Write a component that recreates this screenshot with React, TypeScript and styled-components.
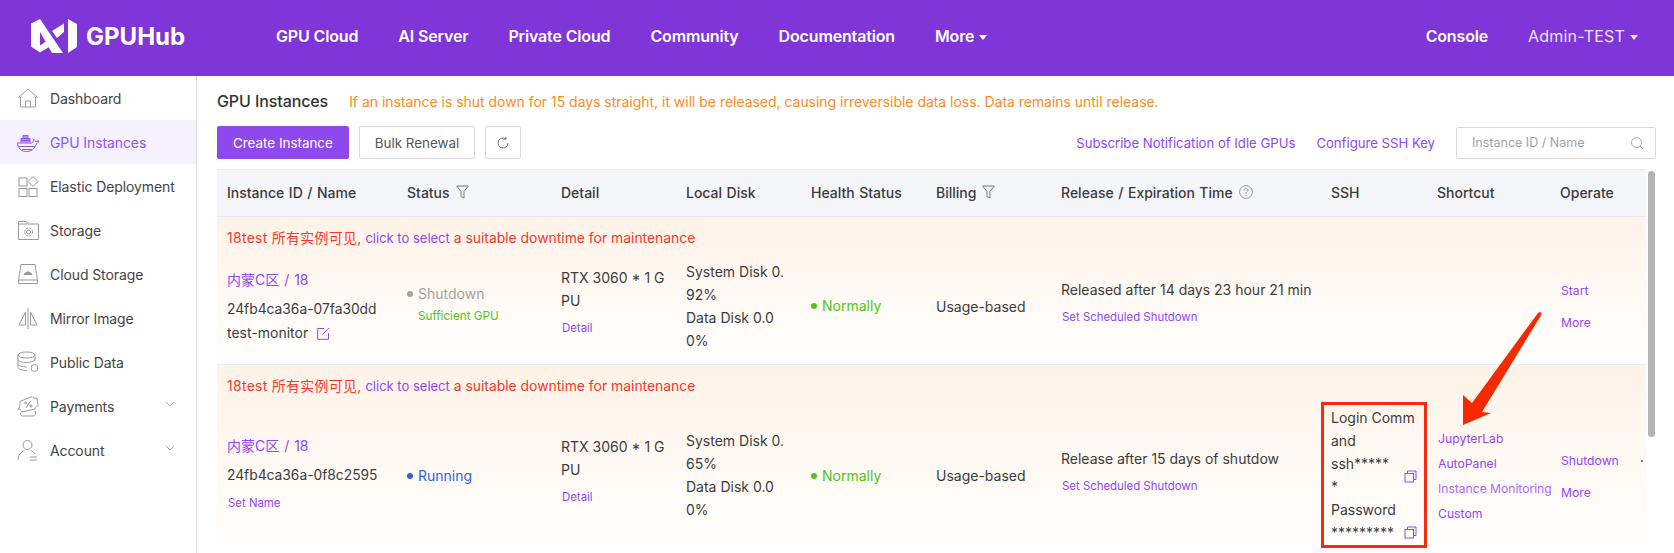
import styled, { createGlobalStyle } from "styled-components";
import { ReactNode } from "react";

const GlobalStyle = createGlobalStyle`
  html, body { margin: 0; padding: 0; height: 100%; overflow: hidden; background: #fff; }
  body { font-family: Inter, "Noto Sans CJK SC", sans-serif; font-size: 14px; color: #333; }
`;

const purple = "#9048f0";

const Page = styled.div`
  height: 553px;
  display: flex;
  flex-direction: column;
  overflow: hidden;
`;

const Header = styled.header`
  height: 76px;
  box-sizing: border-box;
  flex: none;
  background: #7f35d8;
  display: flex;
  align-items: center;
  padding: 0 36px 4px 31px;
  color: #fff;
`;

const Brand = styled.div`
  width: 245px;
  display: flex;
  align-items: center;
  gap: 9px;
  font-size: 24px;
  font-weight: 700;
`;

const Nav = styled.nav`
  flex: 1;
  display: flex;
  align-items: center;
  gap: 40px;
`;

const NavLink = styled.span`
  font-size: 16px;
  font-weight: 600;
  letter-spacing: -0.15px;
  display: flex;
  align-items: center;
  gap: 5px;
`;

const UserLink = styled(NavLink)`
  font-weight: 400;
  letter-spacing: 0.2px;
  opacity: 0.86;
  margin-left: 40px;
`;

const Caret = styled.i`
  width: 0;
  height: 0;
  border-left: 4.5px solid transparent;
  border-right: 4.5px solid transparent;
  border-top: 5px solid #fff;
  margin-top: 2px;
`;

const Body = styled.div`
  flex: 1;
  min-height: 0;
  display: flex;
`;

const Sidebar = styled.aside`
  width: 196px;
  flex: none;
  border-right: 1px solid #dcdde2;
`;

const MenuItem = styled.div<{ $active?: boolean }>`
  height: 44px;
  display: flex;
  align-items: center;
  padding-left: 16px;
  gap: 10px;
  color: ${(p) => (p.$active ? "#9254f0" : "#444")};
  background: ${(p) => (p.$active ? "#f6f1fe" : "transparent")};
  svg.ico {
    width: 24px;
    height: 24px;
    flex: none;
    fill: none;
    stroke: ${(p) => (p.$active ? "#9254f0" : "#999")};
    stroke-width: 1;
  }
`;

const MenuLabel = styled.span`
  flex: 1;
  letter-spacing: -0.1px;
`;

const Chevron = styled.svg`
  width: 10px;
  height: 6px;
  margin: 0 21px 4px 0;
  fill: none;
  stroke: #aaa;
`;

const Main = styled.main`
  flex: 1;
  min-width: 0;
  padding: 0 18px 0 20px;
`;

const TitleRow = styled.div`
  height: 50px;
  display: flex;
  align-items: center;
  gap: 21px;
`;

const Title = styled.h1`
  margin: 0;
  font-size: 16px;
  font-weight: 500;
  color: #333;
  letter-spacing: -0.1px;
`;

const Warning = styled.span`
  font-size: 13.95px;
  color: #fa8c23;
`;

const Toolbar = styled.div`
  height: 33px;
  display: flex;
  align-items: center;
  gap: 10px;
`;

const Button = styled.button<{ $primary?: boolean }>`
  height: 33px;
  padding: 0 15px;
  box-sizing: border-box;
  font: inherit;
  font-size: 13.4px;
  border-radius: 2px;
  border: 1px solid ${(p) => (p.$primary ? "#8f48ec" : "#dcdde2")};
  background: ${(p) => (p.$primary ? "#8f48ec" : "#fff")};
  color: ${(p) => (p.$primary ? "#fff" : "#555")};
`;

const RefreshButton = styled(Button)`
  width: 36px;
  padding: 0;
  display: flex;
  align-items: center;
  justify-content: center;
`;

const ToolbarRight = styled.div`
  margin-left: auto;
  display: flex;
  align-items: center;
  gap: 21px;
`;

const ToolLink = styled.span`
  font-size: 13.15px;
  color: ${purple};
`;

const SearchBox = styled.div`
  width: 200px;
  height: 32px;
  box-sizing: border-box;
  border: 1px solid #dcdde2;
  border-radius: 2px;
  display: flex;
  align-items: center;
  justify-content: space-between;
  padding: 0 11px 0 15px;
  color: #a0a3ab;
  font-size: 12.5px;
`;

const TableWrap = styled.div`
  position: relative;
  margin-top: 10px;
  padding-right: 10px;
`;

const Scrollbar = styled.div`
  position: absolute;
  right: 1px;
  top: 2px;
  width: 7px;
  height: 266px;
  border-radius: 4px;
  background: #b3b3b3;
`;

const columns = "180px 154px 125px 125px 125px 125px 270px 106px 123px 1fr";

const HeadRow = styled.div`
  display: grid;
  grid-template-columns: ${columns};
  height: 48px;
  box-sizing: border-box;
  align-items: center;
  padding-bottom: 2px;
  background: #f5f6fa;
  border-top: 1px solid #e9eaf0;
  border-bottom: 1px solid #e9eaf0;
  font-weight: 500;
  font-size: 14px;
  word-spacing: 0.8px;
  color: #3b3b3b;
`;

const HeadCell = styled.div`
  padding-left: 10px;
  display: flex;
  align-items: center;
  gap: 6px;
  white-space: nowrap;
`;

const Row = styled.div`
  background: linear-gradient(#fff3e8, #fff);
  border-bottom: 1px solid #e9edf5;
  padding-bottom: 12px;
`;

const Notice = styled.div<{ $height: number }>`
  height: ${(p) => p.$height}px;
  box-sizing: border-box;
  padding: 11px 0 0 10px;
  font-size: 13.9px;
  line-height: 20px;
  color: #f5382c;
`;

const NoticeCjk = styled.span`
  letter-spacing: 0.33px;
`;

const NoticeLink = styled.span`
  color: ${purple};
  font-size: 13px;
`;

const Cells = styled.div`
  display: grid;
  grid-template-columns: ${columns};
  align-items: center;
`;

const Cell = styled.div<{ $lift?: number }>`
  padding: 0 10px ${(p) => p.$lift ?? 0}px;
  line-height: 23px;
  font-size: 14px;
  color: #3c3c3c;
  word-break: break-all;
  position: relative;
`;

const Wide = styled(Cell)`
  white-space: nowrap;
`;

const Region = styled.div`
  color: ${purple};
  word-spacing: 1px;
  margin-bottom: 7px;
`;

const MachineId = styled.div`
  font-size: 13.8px;
`;

const EditIcon = styled.svg`
  width: 13px;
  height: 13px;
  margin-left: 9px;
  vertical-align: -2px;
  fill: none;
  stroke: ${purple};
`;

const SmallLink = styled.div`
  font-size: 11.4px;
  line-height: 18px;
  color: ${purple};
  margin-top: 7px;
  padding-left: 1px;
`;

const StatusText = styled.div<{ $color: string }>`
  color: ${(p) => p.$color};
  white-space: nowrap;
`;

const Dot = styled.i<{ $color: string }>`
  display: inline-block;
  width: 6px;
  height: 6px;
  border-radius: 50%;
  margin-right: 5px;
  vertical-align: 2px;
  background: ${(p) => p.$color};
`;

const GpuNote = styled.div`
  font-size: 11.7px;
  line-height: 23px;
  color: #52c41a;
  padding-left: 11px;
`;

const CopyLine = styled.div`
  position: relative;
`;

const CopyIcon = styled.svg<{ $bottom: number }>`
  position: absolute;
  right: 0;
  bottom: ${(p) => p.$bottom}px;
  width: 13px;
  height: 13px;
  fill: none;
  stroke: ${purple};
`;

const RedBox = styled.div`
  position: absolute;
  left: 0;
  right: 0;
  top: -4px;
  bottom: -4px;
  border: 3px solid #f02d12;
  box-sizing: border-box;
  pointer-events: none;
`;

const LinkStack = styled.div<{ $gap: number; $top: number }>`
  display: flex;
  flex-direction: column;
  gap: ${(p) => p.$gap}px;
  padding: ${(p) => p.$top}px 0 0 1px;
  font-size: 12.2px;
  line-height: 16px;
  color: ${purple};
  white-space: nowrap;
`;

const Fade = styled.span`
  font-size: 12.1px;
  opacity: 0.8;
`;

const Arrow = styled.svg`
  position: absolute;
  left: 1246px;
  top: 143px;
  width: 80px;
  height: 115px;
  fill: #f52a00;
  overflow: visible;
`;

const Stray = styled.i`
  position: absolute;
  right: 3px;
  top: calc(50% - 15px);
  width: 2px;
  height: 2px;
  border-radius: 50%;
  background: #555;
`;

function Logo() {
  return (
    <svg width="46" height="34" viewBox="11 9 46 34" fill="#fff">
      <path d="M11 13.500 20 9 43 43H32L20 22V35.500L26 31.500 29 37 20 42.500 11 36.500Z" />
      <path d="M32 21 44 13.500V22L37 28Z" />
      <path d="M48 9 57 14V37L48 43Z" />
    </svg>
  );
}

const icons: Record<string, ReactNode> = {
  home: (
    <>
      <path d="M2 12 12 3l10 9M4.500 10.500V21h15V10.500" />
      <path d="M9.500 21v-6h5v6" />
    </>
  ),
  whale: (
    <>
      <path d="M1.500 13h14.500c1-.4 1.500-2.500 2-3.500 1 1 1.500 1.500 1.700 2.300l3-1c0 1-.8 2.500-2.400 3C19 19 15 21.500 10.500 21.500 5 21.500 2 18 1.500 13Z" />
      <path d="M3 16.500h16M6 19.500h10" />
      <path d="M5 12.500v-4h9v4M7 8.500v-3h5v3M5 10.500h9" fill="currentColor" fillOpacity=".6" />
    </>
  ),
  apps: (
    <>
      <rect x="3" y="4" width="8" height="8" />
      <path d="m17 2.500 5 5-5 5-5-5Z" />
      <rect x="3" y="14.500" width="8" height="8" />
      <rect x="13" y="14.500" width="8" height="8" />
    </>
  ),
  folder: (
    <>
      <path d="M2.500 21.500V3.500h8l1 2.500h11v15.500Z" />
      <path d="M2.500 6h9" />
      <circle cx="12.500" cy="14" r="2" />
      <circle cx="12.500" cy="14" r="4" strokeDasharray="2 1.200" />
    </>
  ),
  drive: (
    <>
      <path d="M5 2.500h14L21.500 18v3.500h-19V18Z" />
      <path d="M2.500 18h19" />
      <path d="M8 12.500c0-1 1-1.500 2-1.500.5-1.500 3.500-1.500 4 0 1 0 2 .5 2 1.500Z" fill="#999" />
    </>
  ),
  mirror: (
    <>
      <path d="M12 2v21" />
      <path d="M9.500 6v13H3ZM14.500 6v13H21Z" />
    </>
  ),
  data: (
    <>
      <ellipse cx="10.500" cy="5" rx="8.500" ry="3" />
      <path d="M2 5v12.500c0 1.500 4 3 9 3M19 5v6M2 9.500c0 1.500 4 3 8.500 3s8.500-1.500 8.500-3M2 14c0 1.500 4 3 9 3" />
      <circle cx="18.500" cy="18" r="3.500" />
    </>
  ),
  pay: (
    <>
      <path d="M4 7.500 16 2.500c1 1.500 3 2 5 1.500l1 7.500c-2 1-3 2-3 3.500L6 18c-.5-1.500-2-2.500-3.500-2.500C3.500 13 4.500 10 4 7.500Z" />
      <path d="M5 18.500c-1 .5-1 2.500 1 3.500h11c2-.5 3-2 2.500-5" />
      <path d="m10 14 4.500-7" />
      <circle cx="9.800" cy="9" r="1.100" />
      <circle cx="15" cy="12" r="1.100" />
    </>
  ),
  user: (
    <>
      <circle cx="11.500" cy="7" r="4.500" />
      <path d="M2 22c0-5 3-8 6.500-9.500M14.500 12.500c2 .8 3.500 2 4.500 3.500M14 19h7M14 22h7" />
    </>
  ),
};

const menu = [
  { label: "Dashboard", icon: "home" },
  { label: "GPU Instances", icon: "whale", active: true },
  { label: "Elastic Deployment", icon: "apps" },
  { label: "Storage", icon: "folder" },
  { label: "Cloud Storage", icon: "drive" },
  { label: "Mirror Image", icon: "mirror" },
  { label: "Public Data", icon: "data" },
  { label: "Payments", icon: "pay", more: true },
  { label: "Account", icon: "user", more: true },
];

function Filter() {
  return (
    <svg width="13" height="14" viewBox="0 0 13 14" fill="none" stroke="#777">
      <path d="M.7 1h11.600L8 6.500V13l-3-1.500v-5Z" />
    </svg>
  );
}

function Copy({ bottom }: { bottom: number }) {
  return (
    <CopyIcon $bottom={bottom} viewBox="0 0 13 13">
      <rect x="1" y="3.500" width="8.500" height="8.500" />
      <path d="M3.500 3.500V1H12v8.500H9.500" />
    </CopyIcon>
  );
}

function NoticeLine({ height }: { height: number }) {
  return (
    <Notice $height={height}>
      <NoticeCjk>18test 所有实例可见,</NoticeCjk> <NoticeLink>click to select</NoticeLink> a suitable downtime for maintenance
    </Notice>
  );
}

function App() {
  return (
    <Page>
      <GlobalStyle />
      <Header>
        <Brand>
          <Logo />
          GPUHub
        </Brand>
        <Nav>
          <NavLink>GPU Cloud</NavLink>
          <NavLink>AI Server</NavLink>
          <NavLink>Private Cloud</NavLink>
          <NavLink>Community</NavLink>
          <NavLink>Documentation</NavLink>
          <NavLink>
            More <Caret />
          </NavLink>
        </Nav>
        <NavLink>Console</NavLink>
        <UserLink>
          Admin-TEST <Caret />
        </UserLink>
      </Header>
      <Body>
        <Sidebar>
          {menu.map((m) => (
            <MenuItem key={m.label} $active={m.active}>
              <svg className="ico" viewBox="0 0 24 24">
                {icons[m.icon]}
              </svg>
              <MenuLabel>{m.label}</MenuLabel>
              {m.more && (
                <Chevron viewBox="0 0 10 6">
                  <path d="m1 1 4 4 4-4" />
                </Chevron>
              )}
            </MenuItem>
          ))}
        </Sidebar>
        <Main>
          <TitleRow>
            <Title>GPU Instances</Title>
            <Warning>
              If an instance is shut down for 15 days straight, it will be released, causing irreversible data loss. Data remains until release.
            </Warning>
          </TitleRow>
          <Toolbar>
            <Button $primary>Create Instance</Button>
            <Button>Bulk Renewal</Button>
            <RefreshButton>
              <svg width="14" height="14" viewBox="0 0 14 14" fill="none" stroke="#777">
                <path d="M12 7a5 5 0 1 1-2-4M10 .8V3.200H7.600" />
              </svg>
            </RefreshButton>
            <ToolbarRight>
              <ToolLink>Subscribe Notification of Idle GPUs</ToolLink>
              <ToolLink>Configure SSH Key</ToolLink>
              <SearchBox>
                Instance ID / Name
                <svg width="14" height="14" viewBox="0 0 14 14" fill="none" stroke="#aaa">
                  <circle cx="6.500" cy="6.500" r="5" />
                  <path d="m10 10 3 3" />
                </svg>
              </SearchBox>
            </ToolbarRight>
          </Toolbar>
          <TableWrap>
            <Scrollbar />
            <HeadRow>
              <HeadCell>Instance ID / Name</HeadCell>
              <HeadCell>
                Status <Filter />
              </HeadCell>
              <HeadCell>Detail</HeadCell>
              <HeadCell>Local Disk</HeadCell>
              <HeadCell>Health Status</HeadCell>
              <HeadCell>
                Billing <Filter />
              </HeadCell>
              <HeadCell>
                Release / Expiration Time
                <svg width="14" height="14" viewBox="0 0 14 14" fill="none" stroke="#999">
                  <circle cx="7" cy="7" r="6.400" />
                  <path d="M5 5.500a2 2 0 1 1 3 1.700c-.7.400-1 .8-1 1.600M7 10v1" />
                </svg>
              </HeadCell>
              <HeadCell>SSH</HeadCell>
              <HeadCell>Shortcut</HeadCell>
              <HeadCell>Operate</HeadCell>
            </HeadRow>

            <Row>
              <NoticeLine height={43} />
              <Cells>
                <Wide>
                  <Region>内蒙C区 / 18</Region>
                  <MachineId>24fb4ca36a-07fa30dd</MachineId>
                  <div>
                    test-monitor
                    <EditIcon viewBox="0 0 13 13">
                      <path d="M7 1.500H.7v10.800h10.800V6M5.500 7.500 12 1" />
                    </EditIcon>
                  </div>
                </Wide>
                <Cell $lift={2}>
                  <StatusText $color="#a3a3a3">
                    <Dot $color="#a3a3a3" />
                    Shutdown
                  </StatusText>
                  <GpuNote>Sufficient GPU</GpuNote>
                </Cell>
                <Cell $lift={9}>
                  RTX 3060 * 1 GPU
                  <SmallLink>Detail</SmallLink>
                </Cell>
                <Cell>System Disk 0.92%<br />Data Disk 0.00%</Cell>
                <Cell $lift={2}>
                  <StatusText $color="#52c41a">
                    <Dot $color="#52c41a" />
                    Normally
                  </StatusText>
                </Cell>
                <Cell>Usage-based</Cell>
                <Wide $lift={8}>
                  Released after 14 days 23 hour 21 min
                  <SmallLink>Set Scheduled Shutdown</SmallLink>
                </Wide>
                <Cell />
                <Cell />
                <Cell>
                  <LinkStack $gap={16} $top={2}>
                    <span>Start</span>
                    <span>More</span>
                  </LinkStack>
                </Cell>
              </Cells>
            </Row>

            <Row>
              <NoticeLine height={41} />
              <Cells>
                <Wide $lift={5}>
                  <Region>内蒙C区 / 18</Region>
                  <MachineId>24fb4ca36a-0f8c2595</MachineId>
                  <SmallLink>Set Name</SmallLink>
                </Wide>
                <Cell>
                  <StatusText $color="#2f5fe8">
                    <Dot $color="#2f5fe8" />
                    Running
                  </StatusText>
                </Cell>
                <Cell $lift={9}>
                  RTX 3060 * 1 GPU
                  <SmallLink>Detail</SmallLink>
                </Cell>
                <Cell>System Disk 0.65%<br />Data Disk 0.00%</Cell>
                <Cell>
                  <StatusText $color="#52c41a">
                    <Dot $color="#52c41a" />
                    Normally
                  </StatusText>
                </Cell>
                <Cell>Usage-based</Cell>
                <Wide $lift={8}>
                  Release after 15 days of shutdow
                  <SmallLink>Set Scheduled Shutdown</SmallLink>
                </Wide>
                <Cell>
                  <RedBox />
                  <CopyLine>
                    Login Command
                    <br />
                    ssh*****
                    <br />*
                    <Copy bottom={15} />
                  </CopyLine>
                  <CopyLine>
                    Password
                    <br />
                    *********
                    <Copy bottom={5} />
                  </CopyLine>
                </Cell>
                <Cell>
                  <LinkStack $gap={9} $top={2}>
                    <span>JupyterLab</span>
                    <span>AutoPanel</span>
                    <Fade>Instance Monitoring</Fade>
                    <span>Custom</span>
                  </LinkStack>
                </Cell>
                <Cell>
                  <LinkStack $gap={16} $top={4}>
                    <span>Shutdown</span>
                    <span>More</span>
                  </LinkStack>
                  <Stray />
                </Cell>
              </Cells>
            </Row>

            <Arrow viewBox="0 0 80 115">
              <path d="M75 1C76-.5 79 0 78.500 2.500L19 100l9 1L0 113V83l9 8Z" />
            </Arrow>
          </TableWrap>
        </Main>
      </Body>
    </Page>
  );
}

export default App;
